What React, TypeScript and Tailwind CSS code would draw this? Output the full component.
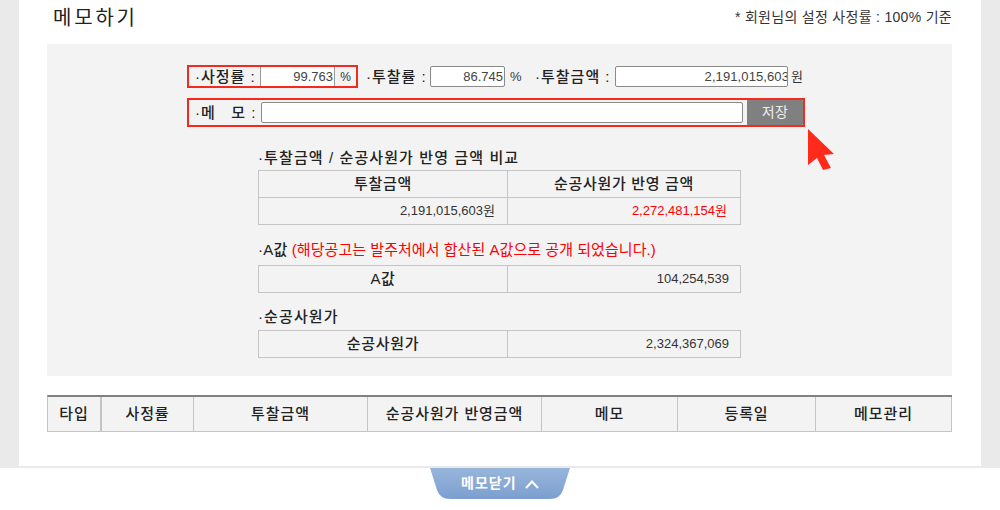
const font = { fontFamily: '"Liberation Sans", "Noto Sans CJK KR", sans-serif' };

function Field({ value, w, clip }: { value: string; w: string; clip?: boolean }) {
  return (
    <div className={`${w} h-[21px] bg-white border border-[#8a8a8a] rounded-[2px] text-right text-[13px] leading-[20px] text-[#444] pr-[1px] overflow-hidden whitespace-nowrap`}>
      <span className={clip ? 'inline-block -mr-[3px] tracking-[0.1px]' : ''}>{value}</span>
    </div>
  );
}

function Label({ children }: { children: React.ReactNode }) {
  return <span className="text-[15px] font-medium text-[#222] whitespace-nowrap tracking-[1px]">{children}</span>;
}

const headCell = 'text-center text-[15px] font-medium text-[#222] tracking-[0.7px]';

function Compare({
  title,
  titleH,
  rows,
}: {
  title: React.ReactNode;
  titleH: string;
  rows: { l: string; r: string; red?: boolean; head?: boolean; lHead?: boolean }[];
}) {
  return (
    <div className="w-[483px]">
      <div className={`${titleH} text-[15px] leading-[20px] font-medium text-[#222] whitespace-nowrap tracking-[1.1px]`}>{title}</div>
      <div className="border-t border-l border-[#c4c4c4]">
        {rows.map((row, i) => (
          <div key={i} className="flex h-[27px] border-b border-[#c4c4c4] text-[13px] leading-[26px]">
            <div className={`w-[249px] border-r border-[#c4c4c4] ${row.head || row.lHead ? headCell : 'text-right pr-[12px] text-[#333]'}`}>
              {row.l}
            </div>
            <div className={`flex-1 border-r border-[#c4c4c4] ${row.head ? headCell : row.red ? 'text-right pr-[13px] text-[#f00]' : 'text-right pr-[11px] text-[#333]'}`}>
              {row.r}
            </div>
          </div>
        ))}
      </div>
    </div>
  );
}

const cols: [string, string][] = [
  ['타입', 'w-[54px]'],
  ['사정률', 'w-[92px]'],
  ['투찰금액', 'w-[174px]'],
  ['순공사원가 반영금액', 'w-[174px]'],
  ['메모', 'w-[136px]'],
  ['등록일', 'w-[138px]'],
  ['메모관리', 'flex-1'],
];

export default function App() {
  return (
    <div style={font} className="w-[1000px] h-[510px] overflow-hidden bg-white relative">
      <div className="h-[468px] bg-[#eaeaea] px-[19px] pb-[2px]">
        <div className="h-[466px] bg-white pl-[28px] pr-[29px]">
          <div className="h-[44px] flex justify-between items-start">
            <h1 className="pl-[6px] pt-[5px] text-[20px] leading-[26px] text-[#222] tracking-[2.8px]">메모하기</h1>
            <span className="pt-[9px] text-[14px] leading-[16px] text-[#333] tracking-[0.3px]">* 회원님의 설정 사정률 : 100% 기준</span>
          </div>

          <div className="h-[332px] bg-[#f3f3f3] pt-[21px] flex flex-col">
            <div className="flex items-center h-[23px] ml-[140px]">
              <div className="flex items-center w-[171px] h-[23px] border-2 border-[#f52a1f] pl-[6px]">
                <span className="w-[65px]"><Label>·사정률 :</Label></span>
                <div className="w-[75px] h-[19px] bg-white border-x border-[#9a9a9a] text-right text-[13px] leading-[19px] text-[#444] pr-[1px]">99.763</div>
                <span className="flex-1 text-center text-[12px] text-[#333]">%</span>
              </div>
              <span className="ml-[8px] w-[64px]"><Label>·투찰률 :</Label></span>
              <Field value="86.745" w="w-[75px]" />
              <span className="ml-[5px] w-[25px] text-[13px] text-[#333]">%</span>
              <span className="w-[80px]"><Label>·투찰금액 :</Label></span>
              <Field value="2,191,015,603" w="w-[173px]" clip />
              <span className="ml-[3px] text-[13px] text-[#333]">원</span>
            </div>

            <div className="relative flex items-center w-[618px] h-[29px] ml-[140px] mt-[10px] border-2 border-[#f52a1f] pl-[6px]">
              <span className="w-[66px]"><Label>·메&nbsp;&nbsp;&nbsp;모 :</Label></span>
              <div className="w-[483px] h-[21px] bg-white border border-[#8a8a8a] rounded-[2px]" />
              <button className="ml-[4px] w-[56px] h-[25px] bg-[#808080] text-[#eee] text-[14px] leading-[25px] rounded-[1px] tracking-[0.5px]">저장</button>
              <svg className="absolute left-[617px] top-[27px] w-[30px] h-[44px]" viewBox="0 0 30 44">
                <path d="M2 2 L28 27 L18 28 L25 41 L17 43 L11 31 L2 38 Z" fill="#ff2a1c" />
              </svg>
            </div>

            <div className="ml-[211px] mt-[21px] flex flex-col">
              <Compare
                titleH="h-[22px]"
                title="·투찰금액 / 순공사원가 반영 금액 비교"
                rows={[
                  { l: '투찰금액', r: '순공사원가 반영 금액', head: true },
                  { l: '2,191,015,603원', r: '2,272,481,154원', red: true },
                ]}
              />
              <div className="mt-[15px]">
                <Compare
                  titleH="h-[25px]"
                  title={<><span className="tracking-[0.2px]">·A값 </span><span className="text-[#f00] font-normal tracking-[0.05px]">(해당공고는 발주처에서 합산된 A값으로 공개 되었습니다.)</span></>}
                  rows={[{ l: 'A값', r: '104,254,539', lHead: true }]}
                />
              </div>
              <div className="mt-[14px]">
                <Compare titleH="h-[23px]" title="·순공사원가" rows={[{ l: '순공사원가', r: '2,324,367,069', lHead: true }]} />
              </div>
            </div>
          </div>

          <div className="mt-[19px] h-[37px] flex border-t-2 border-[#808080] border-b border-l border-[#c4c4c4] border-t-[#808080] bg-[#f3f3f3]">
            {cols.map(([t, w], i) => (
              <div key={t} className={`${w} h-full border-r border-[#c4c4c4] text-center text-[15px] leading-[34px] font-medium text-[#222] tracking-[0.9px] ${i === 0 ? 'border-r-[2px]' : ''}`}>
                {t}
              </div>
            ))}
          </div>
        </div>
      </div>

      <button className="absolute left-[430px] top-[468px] w-[140px] h-[31px]">
        <svg className="absolute inset-0 w-full h-full" viewBox="0 0 140 31">
          <defs>
            <linearGradient id="tab" x1="0" y1="0" x2="0" y2="1">
              <stop offset="0" stopColor="#98b6dc" />
              <stop offset="1" stopColor="#7b9fce" />
            </linearGradient>
          </defs>
          <path d="M0 0 H140 L133 22 Q130 31 120 31 H20 Q10 31 7 22 Z" fill="url(#tab)" />
          <path d="M96 20 L102 13.5 L108 20" fill="none" stroke="#fff" strokeWidth="2" />
        </svg>
        <span className="absolute left-[31px] top-[7px] text-[14px] leading-[16px] font-bold text-white tracking-[1px] whitespace-nowrap">메모닫기</span>
      </button>
    </div>
  );
}
